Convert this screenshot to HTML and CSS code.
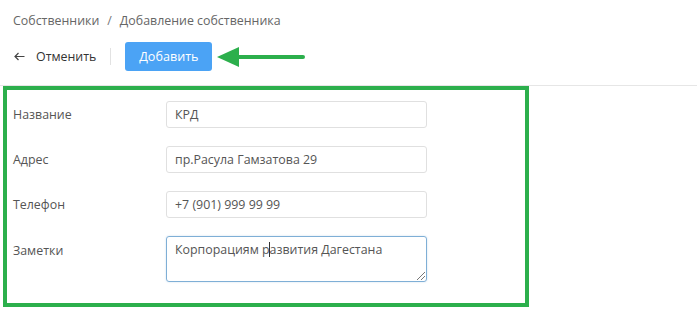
FILE: index.html
```html
<!DOCTYPE html>
<html lang="ru">
<head>
<meta charset="utf-8">
<link rel="stylesheet" href="styles.css">
</head>
<body>
<div class="breadcrumb">
  <span class="crumb">Собственники</span>
  <span class="slash">/</span>
  <span class="crumb">Добавление собственника</span>
</div>
<div class="toolbar">
  <a class="back">
    <svg class="back-icon" width="11" height="9" viewBox="0 0 11 9"><path d="M10.5 4.5H1M4.5 1L1 4.5L4.5 8" fill="none" stroke="#444" stroke-width="1.2"/></svg>
    <span>Отменить</span>
  </a>
  <span class="sep"></span>
  <button class="btn-primary">Добавить</button>
  <svg class="pointer" width="90" height="22" viewBox="0 0 90 22"><polygon points="0,11 22,1 22,21" fill="#2caf4c"/><line x1="20" y1="11" x2="86" y2="11" stroke="#2caf4c" stroke-width="4" stroke-linecap="round"/></svg>
</div>
<form class="form">
  <div class="row"><label>Название</label><input class="field" value="КРД"></div>
  <div class="row"><label>Адрес</label><input class="field" value="пр.Расула Гамзатова 29"></div>
  <div class="row"><label>Телефон</label><input class="field" value="+7 (901) 999 99 99"></div>
  <div class="row row-top"><label>Заметки</label><div class="area">Корпорациям р<span class="caret"></span>азвития Дагестана</div></div>
</form>
</body>
</html>
```
FILE: styles.css
```css
* { box-sizing: border-box; }
body {
  margin: 0;
  font-family: "Open Sans", "Noto Sans", sans-serif;
  font-size: 12.4px;
  color: #555;
  background: #fff;
}
.breadcrumb {
  padding: 12px 0 0 13px;
  line-height: 18px;
  color: #666;
  display: flex;
  gap: 8px;
}
.slash { color: #777; }
.toolbar {
  display: flex;
  align-items: center;
  padding: 12px 0 14px 14px;
  border-bottom: 1px solid #e6e6e6;
  height: 56px;
}
.back {
  display: flex;
  align-items: center;
  gap: 11px;
  color: #333;
}
.sep {
  width: 1px;
  height: 17px;
  background: #e2e2e2;
  margin: 0 14px 0 14px;
}
.btn-primary {
  font-family: inherit;
  font-size: 12.6px;
  color: #fff;
  background: #4ba3f5;
  border: none;
  border-radius: 3px;
  width: 87px;
  height: 29px;
  padding: 0;
}
.pointer { margin-left: 5px; }
.form {
  margin: 0 0 0 3px;
  width: 526px;
  border: 4px solid #2caf4c;
  padding: 11px 0 21px 6px;
  display: flex;
  flex-direction: column;
  gap: 18px;
}
.row {
  display: flex;
  align-items: center;
}
.row-top { align-items: flex-start; }
.row-top label { padding-top: 6px; }
label {
  width: 153px;
  color: #555;
}
.field {
  width: 261px;
  height: 27px;
  border: 1px solid #e0e0e0;
  border-radius: 3px;
  padding: 0 8px;
  font-family: inherit;
  font-size: 12.4px;
  color: #555;
  background: #fff;
}
.area {
  position: relative;
  width: 261px;
  height: 46px;
  border: 1px solid #7fafd6;
  border-radius: 3px;
  padding: 4px 8px;
  line-height: 18px;
  color: #555;
  box-shadow: 0 0 2px rgba(127,175,214,0.4);
}
.area::after {
  content: "";
  position: absolute;
  right: 1px;
  bottom: 1px;
  width: 8px;
  height: 8px;
  background: linear-gradient(135deg, transparent 45%, #777 45%, #777 52%, transparent 52%, transparent 70%, #777 70%, #777 77%, transparent 77%);
}
.caret {
  display: inline-block;
  width: 1px;
  height: 15px;
  background: #333;
  vertical-align: -3px;
  margin-left: -1px;
}
```
